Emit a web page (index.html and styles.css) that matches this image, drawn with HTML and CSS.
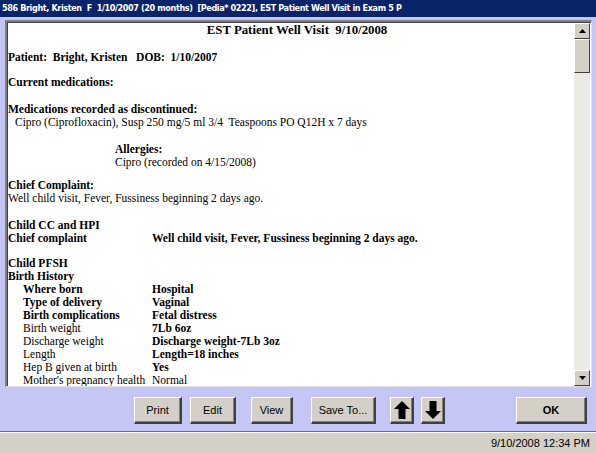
FILE: index.html
```html
<!DOCTYPE html>
<html>
<head>
<meta charset="utf-8">
<link rel="stylesheet" href="styles.css">
</head>
<body>
<div class="window">
  <div class="titlebar">586 Bright, Kristen&nbsp; F&nbsp; 1/10/2007 (20 months)&nbsp; [Pedia* 0222], EST Patient Well Visit in Exam 5 P</div>
  <div class="docwrap">
    <div class="doc">
      <div class="content">
        <div class="title">EST Patient Well Visit&nbsp; 9/10/2008</div>
        <div class="b g-patient">Patient:&nbsp; Bright, Kristen&nbsp;&nbsp; DOB:&nbsp; 1/10/2007</div>
        <div class="b g12">Current medications:</div>
        <div class="b g14">Medications recorded as discontinued:</div>
        <div class="ind">Cipro (Ciprofloxacin), Susp 250 mg/5 ml 3/4&nbsp; Teaspoons PO Q12H x 7 days</div>
        <div class="allergy g14">
          <div class="b">Allergies:</div>
          <div>Cipro (recorded on 4/15/2008)</div>
        </div>
        <div class="b g10">Chief Complaint:</div>
        <div>Well child visit, Fever, Fussiness beginning 2 days ago.</div>
        <div class="b g14">Child CC and HPI</div>
        <div class="row b"><span class="k0">Chief complaint</span><span>Well child visit, Fever, Fussiness beginning 2 days ago.</span></div>
        <div class="b g12">Child PFSH</div>
        <div class="b">Birth History</div>
        <div class="row b"><span class="k">Where born</span><span>Hospital</span></div>
        <div class="row b"><span class="k">Type of delivery</span><span>Vaginal</span></div>
        <div class="row b"><span class="k">Birth complications</span><span>Fetal distress</span></div>
        <div class="row"><span class="k">Birth weight</span><span class="b">7Lb 6oz</span></div>
        <div class="row"><span class="k">Discharge weight</span><span class="b">Discharge weight-7Lb 3oz</span></div>
        <div class="row"><span class="k">Length</span><span class="b">Length=18 inches</span></div>
        <div class="row"><span class="k">Hep B given at birth</span><span class="b">Yes</span></div>
        <div class="row"><span class="k">Mother's pregnancy health</span><span>Normal</span></div>
      </div>
      <div class="scrollbar">
        <div class="sbtn"><svg width="7" height="4" viewBox="0 0 7 4"><path d="M3.5 0L7 4H0Z" fill="#000"/></svg></div>
        <div class="thumb"></div>
        <div class="track"></div>
        <div class="sbtn"><svg width="7" height="4" viewBox="0 0 7 4"><path d="M0 0H7L3.5 4Z" fill="#000"/></svg></div>
      </div>
    </div>
  </div>
  <div class="buttons">
    <button class="btn print">Print</button>
    <button class="btn edit">Edit</button>
    <button class="btn view">View</button>
    <button class="btn save">Save To...</button>
    <button class="btn arrow up"><svg width="16" height="18" viewBox="0 0 16 18"><path d="M8 0L16 8H11.5V18H4.5V8H0Z" fill="#000"/></svg></button>
    <button class="btn arrow down"><svg width="16" height="18" viewBox="0 0 16 18"><path d="M4.5 0H11.5V10H16L8 18L0 10H4.5Z" fill="#000"/></svg></button>
    <button class="btn ok">OK</button>
  </div>
  <div class="status"><span class="clock">9/10/2008 12:34 PM</span></div>
</div>
</body>
</html>
```
FILE: styles.css
```css
* { box-sizing: border-box; }
html, body { margin: 0; padding: 0; }
body {
  width: 596px;
  height: 453px;
  overflow: hidden;
  background: #c6c6f6;
}
.window {
  width: 596px;
  height: 453px;
  display: flex;
  flex-direction: column;
  background: #c6c6f6;
}
.titlebar {
  height: 17px;
  background: #0a246a;
  color: #fff;
  font-family: "DejaVu Sans Condensed", "DejaVu Sans", sans-serif;
  font-stretch: condensed;
  font-weight: bold;
  font-size: 9px;
  letter-spacing: -0.38px;
  line-height: 17px;
  padding-left: 2px;
  white-space: nowrap;
  overflow: hidden;
}
.docwrap {
  padding: 3px 4px 0 5px;
}
.doc {
  height: 367px;
  border-top: 2px solid #808080;
  border-left: 2px solid #808080;
  border-right: 1px solid #e0e0e0;
  border-bottom: 1px solid #e0e0e0;
  box-shadow: inset 1px 1px 0 #404040;
  background: #fff;
  display: flex;
}
.content {
  flex: 1;
  overflow: hidden;
  padding: 0 0 0 1px;
  font-family: "Liberation Serif", serif;
  font-size: 11.5px;
  line-height: 13px;
  color: #000;
}
.title {
  text-align: center;
  font-weight: bold;
  font-size: 12.8px;
  line-height: 16px;
  padding-left: 12px;
}
.b { font-weight: bold; }
.g-patient { margin-top: 13px; }
.g10 { margin-top: 10px; }
.g12 { margin-top: 12px; }
.g14 { margin-top: 14px; }
.ind { padding-left: 7px; }
.allergy { padding-left: 107px; }
.row { display: flex; }
.k0 { width: 144px; flex: none; }
.k { width: 144px; flex: none; padding-left: 15px; }
.scrollbar {
  width: 16px;
  display: flex;
  flex-direction: column;
  background: #eceae4;
  margin: 1px 1px 0 0;
}
.sbtn {
  height: 16px;
  background: #d4d0c8;
  border-top: 1px solid #fff;
  border-left: 1px solid #fff;
  border-right: 1px solid #404040;
  border-bottom: 1px solid #404040;
  display: flex;
  align-items: center;
  justify-content: center;
}
.thumb {
  height: 34px;
  background: #d4d0c8;
  border-top: 1px solid #fff;
  border-left: 1px solid #fff;
  border-right: 1px solid #404040;
  border-bottom: 1px solid #404040;
}
.track { flex: 1; }
.buttons {
  height: 44px;
  display: flex;
  align-items: flex-start;
  padding-top: 10px;
  padding-left: 134px;
}
.btn {
  height: 27px;
  margin: 0;
  padding: 0;
  background: #d4d0c8;
  border-top: 1px solid #fff;
  border-left: 1px solid #fff;
  border-right: 2px solid #404040;
  border-bottom: 2px solid #404040;
  box-shadow: inset -1px -1px 0 #808080;
  font-family: "Liberation Sans", Arial, sans-serif;
  font-size: 11px;
  color: #000;
  display: flex;
  align-items: center;
  justify-content: center;
}
.print { width: 48px; }
.edit { width: 46px; margin-left: 8px; }
.view { width: 42px; margin-left: 15px; }
.save { width: 65px; margin-left: 18px; }
.arrow { width: 24px; }
.up { margin-left: 14px; }
.down { margin-left: 7px; }
.ok { width: 71px; margin-left: 71px; font-weight: bold; }
.status {
  flex: 1;
  background: #d4d0c8;
  border-top: 1px solid #6a6a6a;
  box-shadow: inset 0 1px 0 #fff;
  display: flex;
  align-items: center;
  justify-content: flex-end;
  padding-right: 6px;
  font-family: "Liberation Sans", Arial, sans-serif;
  font-size: 11px;
  color: #000;
}
```
